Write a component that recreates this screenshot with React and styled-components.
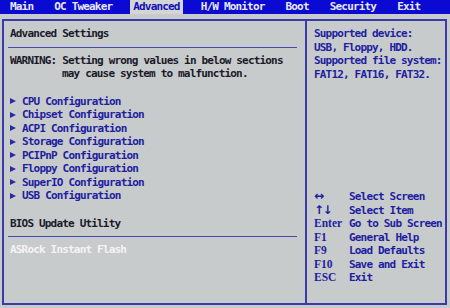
import React from "react";
import styled, { createGlobalStyle } from "styled-components";

const tabs = ["Main", "OC Tweaker", "Advanced", "H/W Monitor", "Boot", "Security", "Exit"];

const items = [
  "CPU Configuration",
  "Chipset Configuration",
  "ACPI Configuration",
  "Storage Configuration",
  "PCIPnP Configuration",
  "Floppy Configuration",
  "SuperIO Configuration",
  "USB Configuration",
];

const help = [
  ["↔", "Select Screen"],
  ["↑↓", "Select Item"],
  ["Enter", "Go to Sub Screen"],
  ["F1", "General Help"],
  ["F9", "Load Defaults"],
  ["F10", "Save and Exit"],
  ["ESC", "Exit"],
];

function App() {
  return (
    <Screen>
      <GlobalStyle />
      <TopBar>
        {tabs.map((t) => (
          <Tab key={t} active={t === "Advanced"}>
            {t}
          </Tab>
        ))}
      </TopBar>

      <Frame>
        <LeftPanel>
          <Title>Advanced Settings</Title>
          <Rule />
          <Warning>
            <div>WARNING: Setting wrong values in below sections</div>
            <div className="indent">may cause system to malfunction.</div>
          </Warning>

          <ItemList>
            {items.map((it) => (
              <Item key={it}>
                <Arrow />
                {it}
              </Item>
            ))}
          </ItemList>

          <Title>BIOS Update Utility</Title>
          <Rule />
          <Flash>ASRock Instant Flash</Flash>
        </LeftPanel>

        <RightPanel>
          <Info>
            <div>Supported device:</div>
            <div>USB, Floppy, HDD.</div>
            <div>Supported file system:</div>
            <div>FAT12, FAT16, FAT32.</div>
          </Info>

          <HelpList>
            {help.map(([k, d]) => (
              <HelpRow key={k}>
                <Key glyph={k.length <= 2 && !k.startsWith("F")}>{k}</Key>
                <span>{d}</span>
              </HelpRow>
            ))}
          </HelpList>
        </RightPanel>
      </Frame>
    </Screen>
  );
}

const GlobalStyle = createGlobalStyle`
  html, body {
    margin: 0;
    padding: 0;
    background: #c8cbcb;
  }
`;

const Screen = styled.div`
  width: 450px;
  height: 308px;
  background: #c8cbcb;
  font-family: "DejaVu Sans Mono", "Liberation Mono", monospace;
  font-size: 11px;
  font-weight: bold;
  letter-spacing: -0.82px;
  line-height: 13.5px;
  display: flex;
  flex-direction: column;
  overflow: hidden;
`;

const TopBar = styled.div`
  height: 14px;
  background: #0a0ad2;
  display: flex;
  align-items: stretch;
  gap: 15px;
  padding-left: 7px;
`;

const Tab = styled.div`
  padding: 0 3px;
  line-height: 14px;
  color: ${(p) => (p.active ? "#1010b8" : "#e8e8f4")};
  background: ${(p) => (p.active ? "#d4d6d6" : "transparent")};
  white-space: pre;
`;

const Frame = styled.div`
  flex: 1;
  margin: 5px 3px 3px 2px;
  border: 2px solid #3a3aa8;
  display: grid;
  grid-template-columns: 303px 1fr;
`;

const LeftPanel = styled.div`
  border-right: 2px solid #3a3aa8;
  padding: 6px 8px 0 4px;
  display: flex;
  flex-direction: column;
`;

const Title = styled.div`
  color: #1a1a2a;
  padding-left: 2px;
`;

const Rule = styled.div`
  height: 1px;
  background: #4848b0;
  margin: 6px 0;
`;

const Warning = styled.div`
  color: #1a1a2a;
  padding-left: 2px;
  white-space: pre;

  & .indent {
    padding-left: 52px;
  }
`;

const ItemList = styled.div`
  margin: 14px 0;
  display: flex;
  flex-direction: column;
`;

const Item = styled.div`
  color: #1e1ea0;
  display: flex;
  align-items: center;
  padding-left: 2px;
`;

const Arrow = styled.span`
  width: 0;
  height: 0;
  border-top: 3.5px solid transparent;
  border-bottom: 3.5px solid transparent;
  border-left: 6px solid #2a2aa8;
  margin-right: 6px;
`;

const Flash = styled.div`
  color: #f4f4f4;
  padding-left: 2px;
`;

const RightPanel = styled.div`
  padding: 6px 0 0 7px;
  display: flex;
  flex-direction: column;
`;

const Info = styled.div`
  color: #1e1ea0;
`;

const HelpList = styled.div`
  margin-top: 109px;
  display: flex;
  flex-direction: column;
  color: #1e1ea0;
`;

const HelpRow = styled.div`
  display: flex;
`;

const Key = styled.span`
  width: 35px;
  flex: none;
  font-family: ${(p) =>
    p.glyph ? `"DejaVu Sans", sans-serif` : `"Liberation Serif", "DejaVu Serif", serif`};
  font-size: ${(p) => (p.glyph ? "12px" : "11.5px")};
  letter-spacing: ${(p) => (p.glyph ? "-1.5px" : "0")};
`;

export default App;
